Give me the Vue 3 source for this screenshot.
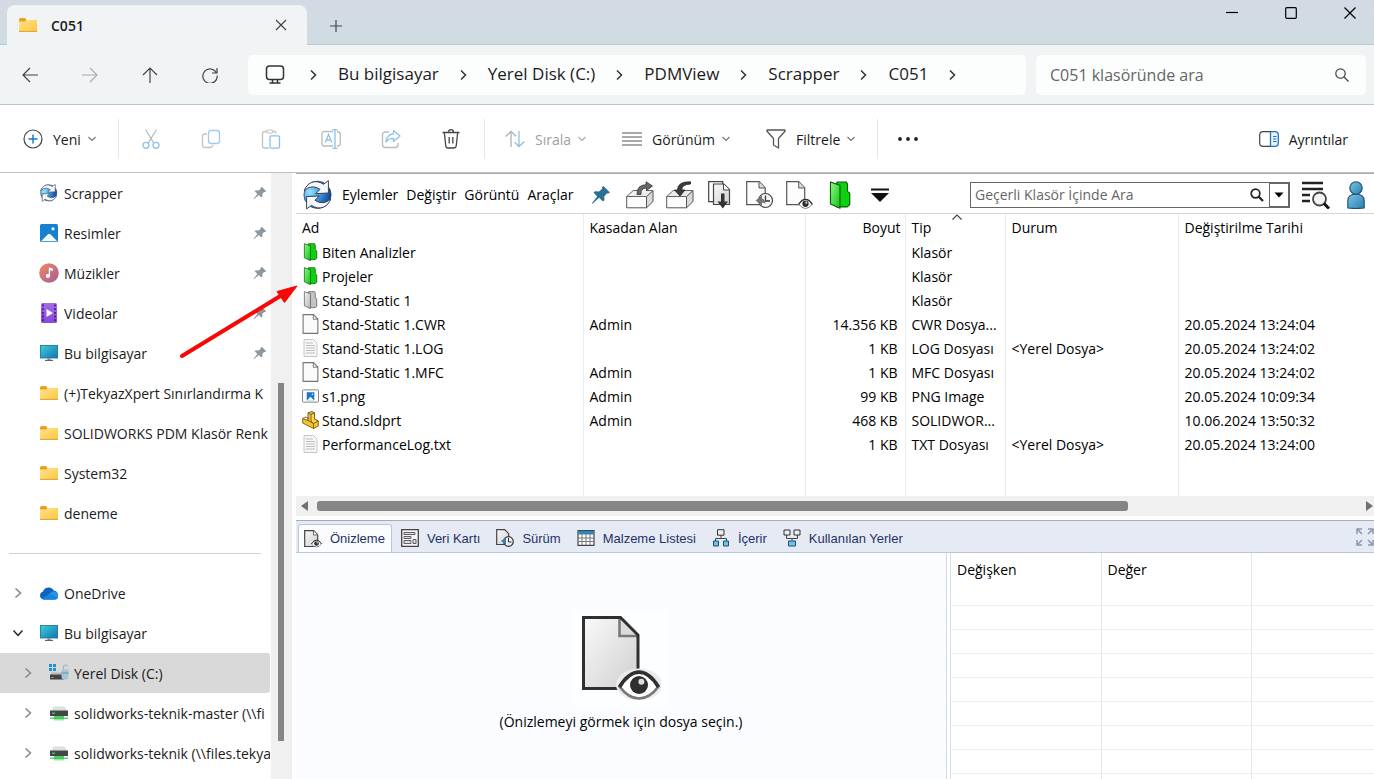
<script setup>
import { ref } from 'vue'

const folderQuery = ref('')
const vaultQuery = ref('')

const crumbs = ['Bu bilgisayar', 'Yerel Disk (C:)', 'PDMView', 'Scrapper', 'C051']

const fileActions = [
  { id: 'cut', label: 'Kes', off: true },
  { id: 'copy', label: 'Kopyala', off: true },
  { id: 'paste', label: 'Yapıştır', off: true },
  { id: 'rename', label: 'Yeniden adlandır', off: true },
  { id: 'share', label: 'Paylaş', off: true },
  { id: 'trash', label: 'Sil', off: false }
]

const viewActions = [
  { id: 'sort', label: 'Sırala', off: true },
  { id: 'lines', label: 'Görünüm', off: false },
  { id: 'funnel', label: 'Filtrele', off: false }
]

const quick = [
  { icon: 'vault', text: 'Scrapper', pinned: true },
  { icon: 'pictures', text: 'Resimler', pinned: true },
  { icon: 'music', text: 'Müzikler', pinned: true },
  { icon: 'videos', text: 'Videolar', pinned: true },
  { icon: 'pc', text: 'Bu bilgisayar', pinned: true },
  { icon: 'folder', text: '(+)TekyazXpert Sınırlandırma K' },
  { icon: 'folder', text: 'SOLIDWORKS PDM Klasör Renk' },
  { icon: 'folder', text: 'System32' },
  { icon: 'folder', text: 'deneme' }
]

const tree = [
  { icon: 'cloud', text: 'OneDrive' },
  { icon: 'pc', text: 'Bu bilgisayar', open: true },
  { icon: 'disk', text: 'Yerel Disk (C:)', child: true, active: true },
  { icon: 'netdrive', text: 'solidworks-teknik-master (\\\\fi', child: true },
  { icon: 'netdrive', text: 'solidworks-teknik (\\\\files.tekya', child: true }
]

const smallIcons = ['vault', 'pictures', 'pc', 'folder', 'netdrive']

const menus = ['Eylemler', 'Değiştir', 'Görüntü', 'Araçlar']

const vaultTools = [
  { id: 'checkout', label: 'Kasadan al' },
  { id: 'checkin', label: 'Kasaya koy' },
  { id: 'getlatest', label: 'Son sürümü al' },
  { id: 'getversion', label: 'Sürüm al' },
  { id: 'preview', label: 'Önizle' },
  { id: 'greenfolder', label: 'Klasör' },
  { id: 'more', label: 'Diğer' }
]

const files = [
  { icon: 'greenfolder', name: 'Biten Analizler', by: '', size: '', type: 'Klasör', state: '', date: '' },
  { icon: 'greenfolder', name: 'Projeler', by: '', size: '', type: 'Klasör', state: '', date: '' },
  { icon: 'greyfolder', name: 'Stand-Static 1', by: '', size: '', type: 'Klasör', state: '', date: '' },
  { icon: 'blank', name: 'Stand-Static 1.CWR', by: 'Admin', size: '14.356 KB', type: 'CWR Dosya...', state: '', date: '20.05.2024 13:24:04' },
  { icon: 'text', name: 'Stand-Static 1.LOG', by: '', size: '1 KB', type: 'LOG Dosyası', state: '<Yerel Dosya>', date: '20.05.2024 13:24:02' },
  { icon: 'blank', name: 'Stand-Static 1.MFC', by: 'Admin', size: '1 KB', type: 'MFC Dosyası', state: '', date: '20.05.2024 13:24:02' },
  { icon: 'image', name: 's1.png', by: 'Admin', size: '99 KB', type: 'PNG Image', state: '', date: '20.05.2024 10:09:34' },
  { icon: 'part', name: 'Stand.sldprt', by: 'Admin', size: '468 KB', type: 'SOLIDWOR...', state: '', date: '10.06.2024 13:50:32' },
  { icon: 'text', name: 'PerformanceLog.txt', by: '', size: '1 KB', type: 'TXT Dosyası', state: '<Yerel Dosya>', date: '20.05.2024 13:24:00' }
]

const tabs = [
  { id: 'tabpreview', text: 'Önizleme' },
  { id: 'tabcard', text: 'Veri Kartı' },
  { id: 'tabversion', text: 'Sürüm' },
  { id: 'tabbom', text: 'Malzeme Listesi' },
  { id: 'tabcontains', text: 'İçerir' },
  { id: 'tabwhere', text: 'Kullanılan Yerler' }
]
const activeTab = ref('tabpreview')
</script>

<template>
  <div class="window">
    <svg class="defs" aria-hidden="true">
      <defs>
        <linearGradient id="gFolder" x1="0" y1="0" x2="1" y2="1"><stop offset="0" stop-color="#ffe394" /><stop offset="1" stop-color="#fdc63c" /></linearGradient>
        <linearGradient id="gGreen" x1="0" y1="0" x2="1" y2="1"><stop offset="0" stop-color="#8dfa8d" /><stop offset="1" stop-color="#0bc50b" /></linearGradient>
        <linearGradient id="gGrey" x1="0" y1="0" x2="1" y2="1"><stop offset="0" stop-color="#f4f4f4" /><stop offset="1" stop-color="#b5b5b5" /></linearGradient>
        <linearGradient id="gPage" x1="0" y1="0" x2="1" y2="1"><stop offset="0" stop-color="#fafafa" /><stop offset="1" stop-color="#cfcfcf" /></linearGradient>
        <linearGradient id="gScreen" x1="0" y1="0" x2="1" y2="1"><stop offset="0" stop-color="#3fd0d8" /><stop offset="1" stop-color="#1173b4" /></linearGradient>
        <linearGradient id="gMusic" x1="0" y1="0" x2="1" y2="1"><stop offset="0" stop-color="#f08a5c" /><stop offset="1" stop-color="#a55c9c" /></linearGradient>
        <linearGradient id="gVideo" x1="0" y1="0" x2="0" y2="1"><stop offset="0" stop-color="#a56be8" /><stop offset="1" stop-color="#8748d6" /></linearGradient>
        <linearGradient id="gPerson" x1="0" y1="0" x2="1" y2="1"><stop offset="0" stop-color="#7cc4e8" /><stop offset="1" stop-color="#2a7fae" /></linearGradient>
        <radialGradient id="gBall" cx=".22" cy=".4" r=".8"><stop offset="0" stop-color="#9fe6ff" /><stop offset=".45" stop-color="#3f9be2" /><stop offset="1" stop-color="#123c94" /></radialGradient>
      </defs>

      <symbol id="folder" viewBox="0 0 18 16">
        <path d="M0 2.500Q0 1 1.500 1H6l1.500 2v3H0z" fill="#e9a21a" />
        <path d="M0 4.500h6L8 3h10v11.500H0z" fill="url(#gFolder)" />
        <path d="M0 14.400h18" stroke="#e0a030" stroke-width="1" />
      </symbol>
      <symbol id="vault" viewBox="0 0 30 30">
        <circle cx="14.500" cy="14.800" r="13.600" fill="url(#gBall)" stroke="#23406e" stroke-width=".8" />
        <g fill="#f6f8fb" stroke="#39424e" stroke-width="1" stroke-linejoin="round">
          <path d="M1.200 11C3.500 3 12-1.500 20.500 4.200L25.400.7V13L12.800 13.600l4.200-4.200C12 5.800 5.500 6 1.200 11z" />
          <path d="M27.800 18.600C25.500 26.600 17 31.100 8.500 25.400L3.600 28.900V16.600l12.600-.6-4.200 4.200C17 23.800 23.500 23.600 27.800 18.600z" />
        </g>
      </symbol>
      <symbol id="pictures" viewBox="0 0 18 18">
        <rect width="18" height="18" rx="1.500" fill="#1880d0" />
        <path d="M1 17.200L8 10.200q1.200-1 2.400 0l6.800 7z" fill="#f5fbff" />
        <circle cx="13" cy="4.800" r="1.600" fill="#fff" />
      </symbol>
      <symbol id="music" viewBox="0 0 20 20">
        <circle cx="10" cy="10" r="9.800" fill="url(#gMusic)" />
        <path d="M9.800 13V4.400l4 1v2.600l-2.800-.7v6z" fill="#fff" /><circle cx="8.900" cy="13" r="2.100" fill="#fff" />
      </symbol>
      <symbol id="videos" viewBox="0 0 16 20">
        <rect width="16" height="20" rx="1.500" fill="url(#gVideo)" />
        <path d="M2 1.500v17M14 1.500v17" stroke="#43207c" stroke-width="1.800" stroke-dasharray="1.800 1.900" />
        <path d="M5.500 6l6.500 4-6.500 4z" fill="#fff" />
      </symbol>
      <symbol id="pc" viewBox="0 0 18 16">
        <rect x=".4" y=".4" width="17.200" height="12.600" fill="url(#gScreen)" stroke="#1b6f98" stroke-width=".8" />
        <path d="M7.500 13h3v2h-3z" fill="#8a98a2" /><path d="M5 15.400h8" stroke="#5b6770" stroke-width="1.200" />
      </symbol>
      <symbol id="cloud" viewBox="0 0 20 14">
        <path d="M4.500 13.500a4 4 0 0 1-.6-7.800A6 6 0 0 1 14.800 4.600a4.600 4.600 0 0 1 1 8.900z" fill="#0b63bd" />
        <path d="M4 13.300L13 5.500a5 5 0 0 1 3 .2 4 4 0 0 1-.2 7.800H4.500z" fill="#2593e6" />
        <path d="M3 12.500l7.500-4.500 8.500 4q-1 1.500-3.200 1.500H4.500z" fill="#1b82dc" />
      </symbol>
      <symbol id="disk" viewBox="0 0 20 18">
        <path d="M0 0h3v3H0zM4 0h3v3H4zM0 4h3v3H0zM4 4h3v3H4z" fill="#1f8fd8" />
        <path d="M2 8.500h12v2H2z" fill="#b8b8b8" /><path d="M1 10.500h14v5H1z" fill="#414345" /><path d="M2.500 13.500h2" stroke="#4be070" stroke-width="1" />
        <path d="M14.500 5.500V3q0-2 2-2t2 1.500" fill="none" stroke="#9ab3c3" stroke-width="1.100" />
        <path d="M12.500 5.500h7v7q0 2.500-2 3h-3q-2-.5-2-3z" fill="#a8c3d4" /><path d="M12.500 9h7" stroke="#5f96b8" stroke-width="1" />
      </symbol>
      <symbol id="netdrive" viewBox="0 0 18 16">
        <path d="M3 2.500q0-1 1-1h10q1 0 1 1L17 6H1z" fill="#dedfe1" />
        <path d="M0 5.500h18v5.500H0z" fill="#434547" /><path d="M2 8.200h3" stroke="#44e06a" stroke-width="1.200" />
        <path d="M4 11h10v3H4z" fill="#4fcf5f" /><path d="M0 13.200h18" stroke="#45c258" stroke-width="1.200" /><path d="M4 14.800h10" stroke="#7be58a" stroke-width="1.200" />
      </symbol>
      <symbol id="pin" viewBox="0 0 20 20">
        <path d="M12.300 1l6.700 6.400-2 1.200-1.200-.2-2.600 3 .3 3.700-1.500 1.400-3.900-3.700L1.500 18.800l-.6-.6 5.300-6.700L2.500 7.600 4 6.200l4 .3L11.200 3.800 11 2.200z" />
      </symbol>
      <symbol id="greenfolder" viewBox="0 0 20 27">
        <path d="M7 1h9.200l1 2.200V10l2.200 1.800v11L17 25H7z" fill="#0cd20c" stroke="#0a5a0a" stroke-width="1.100" stroke-linejoin="round" />
        <path d="M.8 1L10 4.200v22L.8 22.200z" fill="url(#gGreen)" stroke="#0a5a0a" stroke-width="1.100" stroke-linejoin="round" />
      </symbol>
      <symbol id="greyfolder" viewBox="0 0 20 27">
        <path d="M7 1h9.200l1 2.200V10l2.200 1.800v11L17 25H7z" fill="#c3c3c3" stroke="#6c6c6c" stroke-width="1.300" stroke-linejoin="round" />
        <path d="M.8 1L10 4.200v22L.8 22.200z" fill="url(#gGrey)" stroke="#6c6c6c" stroke-width="1.300" stroke-linejoin="round" />
      </symbol>
      <symbol id="blank" viewBox="0 0 16 20">
        <path d="M.6.600h10.400l4.400 4.400v14.400H.6z" fill="#fafafa" stroke="#777" stroke-width="1.100" /><path d="M10.800.8v4.400h4.400" fill="none" stroke="#777" stroke-width="1" />
      </symbol>
      <symbol id="text" viewBox="0 0 16 20">
        <path d="M1.500 1.500h9.500l3.500 3.500v13.500h-13z" fill="#f7f7f7" stroke="#c8c8c8" stroke-width="1" />
        <path d="M3.500 5h7M3.500 7.500h9M3.500 10h9M3.500 12.500h9M3.500 15h9" stroke="#bdbdbd" stroke-width="1" />
      </symbol>
      <symbol id="image" viewBox="0 0 18 14">
        <rect x=".5" y=".5" width="17" height="13" rx="1" fill="#fdfdfd" stroke="#7c7c7c" />
        <rect x="5" y="3" width="8" height="8.500" fill="#1976c8" /><path d="M5.500 11.500L9 7.800l3.500 3.700z" fill="#fff" /><circle cx="11" cy="5.200" r=".8" fill="#fff" />
      </symbol>
      <symbol id="part" viewBox="0 0 17 18">
        <g stroke="#7b5a10" stroke-width=".9" stroke-linejoin="round">
          <path d="M.7 7.500L6 9.500V2l4-1.400L12.500 2v6l3.800 2v5L11.500 17.500 .7 12z" fill="#f4c430" />
          <path d="M6 2l3 1.400L12.500 2 10 .6z" fill="#ffe68c" />
          <path d="M9 3.400v6.600l2.500 2.500 4.800-2.500L12.500 8V2z" fill="#f9d552" />
          <path d="M.7 7.500L4 6l2 1v2.500l5.500 3v5" fill="none" />
        </g>
      </symbol>

      <symbol id="cut" viewBox="0 0 20 20">
        <path d="M4.500.5l8.300 13.600M15.500.5L7.200 14.100" fill="none" stroke="#b3b9bd" stroke-width="1.200" />
        <circle cx="5" cy="16.300" r="3" fill="none" stroke="#8cc0e8" stroke-width="1.300" /><circle cx="15" cy="16.300" r="3" fill="none" stroke="#8cc0e8" stroke-width="1.300" />
      </symbol>
      <symbol id="copy" viewBox="0 0 20 20">
        <path d="M6 5H3.500Q1.500 5 1.500 7v9q0 2.500 2.500 2.500h5q2.500 0 2.800-2.500" fill="none" stroke="#bfc3c6" stroke-width="1.300" />
        <rect x="7.500" y="1.500" width="11" height="13" rx="2.500" fill="none" stroke="#9ccbee" stroke-width="1.300" />
      </symbol>
      <symbol id="paste" viewBox="0 0 20 20">
        <path d="M6 2.500H3.500q-2 0-2 2v12.500q0 2 2 2H8M12 2.500h1q2 0 2 2" fill="none" stroke="#bfc3c6" stroke-width="1.300" />
        <rect x="5.500" y="1" width="6.500" height="3" rx="1.500" fill="none" stroke="#bfc3c6" stroke-width="1.200" />
        <rect x="9" y="6.800" width="9.500" height="12.400" rx="1.500" fill="none" stroke="#8cc0e8" stroke-width="1.300" />
      </symbol>
      <symbol id="rename" viewBox="0 0 20 20">
        <path d="M12 2.500H3.500q-2.500 0-2.500 2.500v9.500q0 2.500 2.500 2.500H12M16 2.500q3.300 0 3.300 2.500v9.500q0 2.500-3.300 2.500" fill="none" stroke="#b7bcc0" stroke-width="1.300" />
        <path d="M4.200 13.500L7.500 5.500l3.300 8M5.300 11h4.400M14 .7v18.600M11.500.7h5M11.500 19.300h5" fill="none" stroke="#8cc0e8" stroke-width="1.300" />
      </symbol>
      <symbol id="share" viewBox="0 0 20 20">
        <path d="M8 3H4.500Q1.500 3 1.500 6v9.500q0 3 3 3H14q3 0 3-3V14" fill="none" stroke="#b7bcc0" stroke-width="1.300" />
        <path d="M12.500 1.500L19 7l-6.500 5.500V9.300Q8 9 5 13q.5-7 7.500-8.300z" fill="none" stroke="#8cc0e8" stroke-width="1.300" stroke-linejoin="round" />
      </symbol>
      <symbol id="trash" viewBox="0 0 20 20">
        <path d="M1.500 3.500h17M3.300 3.500l1.500 13.500q.2 2 2.200 2h6q2 0 2.200-2l1.500-13.500M7.500 3.200q0-2.500 2.500-2.500t2.500 2.500M8.200 8v6.500M11.800 8v6.500" fill="none" stroke="#444" stroke-width="1.300" />
      </symbol>
      <symbol id="sort" viewBox="0 0 20 20">
        <path d="M6 18V2.500M.8 7.500L6 2.300l5 5" fill="none" stroke="#aab2b8" stroke-width="1.300" />
        <path d="M14 2v15.500M9.500 13l4.500 4.500 5.500-5" fill="none" stroke="#8cc0e8" stroke-width="1.300" />
      </symbol>
      <symbol id="lines" viewBox="0 0 20 20">
        <path d="M0 4h20M0 8h20M0 12h20M0 16h20" stroke="#555" stroke-width="1.200" />
      </symbol>
      <symbol id="funnel" viewBox="0 0 20 20">
        <path d="M1.500 1h17q1 0 .5 1.200L12.500 9.500v9.500l-5-3V9.500L1 2.200Q.5 1 1.500 1z" fill="none" stroke="#555" stroke-width="1.300" stroke-linejoin="round" />
      </symbol>

      <symbol id="checkout" viewBox="0 0 28 28">
        <path d="M.7 15.500h19.800v11.300H.7z" fill="#fdfdfd" stroke="#555" /><path d="M20.500 15.500l6.500-6v11l-6.500 6.300z" fill="#d9d9d9" stroke="#555" /><path d="M.7 15.500l6.500-6h5M20 9.500h7l-6.500 6H.7" fill="#eaeaea" stroke="#666" />
        <path d="M11 13.500Q10.500 4 20 3.700V.8L26.500 5 20.500 9.500V7Q14.500 7 15 13.500z" fill="#686868" stroke="#333" stroke-width=".8" />
      </symbol>
      <symbol id="checkin" viewBox="0 0 28 28">
        <path d="M.7 15.500h19.800v11.300H.7z" fill="#fdfdfd" stroke="#555" /><path d="M20.500 15.500l6.500-6v11l-6.500 6.300z" fill="#d9d9d9" stroke="#555" /><path d="M.7 15.500l6.500-6H27l-6.500 6z" fill="#eaeaea" stroke="#666" />
        <path d="M24.500.8Q11.500.5 11.600 9H8.500l5.500 6 5-6h-3.200Q15.500 3.500 24.500 3z" fill="#3c3c3c" stroke="#222" stroke-width=".8" />
      </symbol>
      <symbol id="getlatest" viewBox="0 0 24 28">
        <path d="M.7.700h14v20H.7z" fill="#fff" stroke="#444" stroke-width="1.200" /><path d="M5.500 3h10.500l5.500 5.500v15H5.500z" fill="url(#gPage)" stroke="#444" stroke-width="1.200" /><path d="M15.500 3v6h6" fill="#fff" stroke="#444" />
        <path d="M13 12.500h3.500v8h3.500l-5.200 7-5.300-7H13z" fill="#333" />
      </symbol>
      <symbol id="getversion" viewBox="0 0 28 28">
        <path d="M.7.700h12.500l6 6v17H.7z" fill="#fdfdfd" stroke="#555" stroke-width="1.200" /><path d="M13 .7v6.300h6" fill="#ddd" stroke="#555" />
        <circle cx="19.500" cy="19.500" r="7" fill="#fafafa" stroke="#444" stroke-width="1.200" /><path d="M19.500 14.500v5.500h4.500" fill="none" stroke="#333" stroke-width="1.300" /><path d="M9.500 19.500l6.500-5v3q3 .5 3.500 5.500-1.500-1.500-3.500-1.500v3z" fill="#777" />
      </symbol>
      <symbol id="eye" viewBox="0 0 28 20">
        <path d="M1 11Q7 1 14 1t13 10q-6 8-13 8T1 11z" fill="#fff" stroke="#777" stroke-width="1.800" />
        <path d="M1 11.300Q7 1.500 14 1.500t13 9.800" fill="none" stroke="#303030" stroke-width="2.400" />
        <circle cx="14" cy="10" r="6" fill="#2f2f2f" /><circle cx="15.600" cy="7.900" r="2" fill="#ddd" />
      </symbol>
      <symbol id="preview" viewBox="0 0 28 28">
        <path d="M.7.700h12l6 6v17H.7z" fill="#fdfdfd" stroke="#555" stroke-width="1.200" /><path d="M12.700.7v6.300h6" fill="#ddd" stroke="#555" />
        <use href="#eye" x="12" y="17.500" width="15" height="10.500" />
      </symbol>
      <symbol id="more" viewBox="0 0 20 20"><path d="M1 4.500h18" stroke="#111" stroke-width="2" /><path d="M1 8h18l-9 9z" fill="#111" /></symbol>
      <symbol id="bigpreview" viewBox="0 0 80 84">
        <path d="M2.500 1.500h37L57 19v53.500H2.500z" fill="url(#gPage)" /><path d="M38.500 2v18H57" fill="#dcdcdc" stroke="#777" stroke-width="2.500" />
        <path d="M2.500 1.500h37L57 19v53.500H2.500z" fill="none" stroke="#303030" stroke-width="3" />
        <ellipse cx="58" cy="68.500" rx="23" ry="16" fill="#e9ebed" /><use href="#eye" x="37" y="54" width="42" height="30" />
      </symbol>

      <symbol id="tabpreview" viewBox="0 0 18 18"><path d="M.7.700h9l4 4v11.800H.7z" fill="url(#gPage)" stroke="#444" stroke-width="1.200" /><path d="M9.500.7v4.300h4" fill="#fff" stroke="#666" /><use href="#eye" x="7" y="9" width="11" height="9" /></symbol>
      <symbol id="tabcard" viewBox="0 0 18 18"><path d="M.7.700h16.600v16.600H.7z" fill="#f5f5f5" stroke="#444" stroke-width="1.300" /><path d="M3 3.500h11v2H3zM3 7.500h7v2H3zM3 11.500h7v3H3zM12 10.500h3v4h-3z" fill="#ddd" stroke="#555" stroke-width=".9" /></symbol>
      <symbol id="tabversion" viewBox="0 0 18 18"><path d="M.7.700h8l4 4v10.800H.7z" fill="url(#gPage)" stroke="#444" stroke-width="1.200" /><circle cx="12.500" cy="12.500" r="4.800" fill="#eee" stroke="#333" stroke-width="1.200" /><path d="M12.500 9v4h3" fill="none" stroke="#333" /><path d="M5 12l5-3.500v7z" fill="#3a7fb0" /></symbol>
      <symbol id="tabbom" viewBox="0 0 18 18"><path d="M1 1.700h16v14.600H1z" fill="#fff" stroke="#444" stroke-width="1.200" /><path d="M1 2h16v3.500H1z" fill="#2f86b0" /><path d="M5 5v11M9 5v11M13 5v11M1 9h16M1 12.500h16" stroke="#777" /></symbol>
      <symbol id="tabcontains" viewBox="0 0 18 18"><path d="M9 6v4M3.500 12v-2.500h11V12" fill="none" stroke="#444" /><path d="M5.500.7h6.500v5.500H5.500z" fill="#eee" stroke="#333" /><path d="M1.500 12h5v5h-5zM11.500 12h5v5h-5z" fill="#6cc3e8" stroke="#1c4f70" /></symbol>
      <symbol id="tabwhere" viewBox="0 0 18 18"><path d="M3.500 6v3.500h11V6M9 9.500V12" fill="none" stroke="#444" /><path d="M1 1h6v5H1zM11 1h6v5h-6z" fill="#eee" stroke="#333" /><path d="M5.500 12h7v5h-7z" fill="#6cc3e8" stroke="#1c4f70" /></symbol>
    </svg>

    <header class="titlebar">
      <div class="tab">
        <svg class="i18"><use href="#folder" /></svg>
        <span class="tab-title">C051</span>
        <button class="icon-btn" aria-label="Sekmeyi kapat"><svg class="i12" viewBox="0 0 12 12"><path d="M1 1l10 10M11 1L1 11" class="ink" /></svg></button>
      </div>
      <button class="icon-btn new-tab" aria-label="Yeni sekme"><svg class="i12" viewBox="0 0 12 12"><path d="M6 0v12M0 6h12" class="ink" /></svg></button>
      <div class="win-buttons">
        <button class="icon-btn" aria-label="Simge durumuna küçült"><svg class="i12" viewBox="0 0 12 12"><path d="M0 5.500h12" class="ink black" /></svg></button>
        <button class="icon-btn" aria-label="Ekranı kapla"><svg class="i12" viewBox="0 0 12 12"><rect x=".7" y=".7" width="10.600" height="10.600" rx="1" class="ink black" /></svg></button>
        <button class="icon-btn" aria-label="Kapat"><svg class="i12" viewBox="0 0 12 12"><path d="M.5.5l11 11M11.500.5l-11 11" class="ink black" /></svg></button>
      </div>
    </header>

    <div class="navbar">
      <div class="nav-buttons">
        <button class="icon-btn" aria-label="Geri"><svg class="i16" viewBox="0 0 16 16"><path d="M16 8H1M8 1L1 8l7 7" class="ink" /></svg></button>
        <button class="icon-btn faded" aria-label="İleri" disabled><svg class="i16" viewBox="0 0 16 16"><path d="M0 8h15M8 1l7 7-7 7" class="ink" /></svg></button>
        <button class="icon-btn" aria-label="Yukarı"><svg class="i16" viewBox="0 0 16 16"><path d="M8 16V1M1 8l7-7 7 7" class="ink" /></svg></button>
        <button class="icon-btn" aria-label="Yenile"><svg class="i16" viewBox="0 0 16 16"><path d="M14.500 6A7.200 7.200 0 1 0 15.200 8.500M15 1v5h-5" class="ink" /></svg></button>
      </div>
      <nav class="address" aria-label="Adres">
        <svg class="i20" viewBox="0 0 20 20"><rect x="1.500" y="1" width="17" height="13.500" rx="3" class="ink mid" /><path d="M7.500 14.500v3M12.500 14.500v3M4.500 18h11" class="ink mid" /></svg>
        <svg class="chev first" viewBox="0 0 10 12"><path d="M3 1.500L7.500 6 3 10.500" class="ink mid" /></svg>
        <template v-for="c in crumbs" :key="c">
          <button class="crumb">{{ c }}</button>
          <svg class="chev" viewBox="0 0 10 12"><path d="M3 1.500L7.500 6 3 10.500" class="ink mid" /></svg>
        </template>
      </nav>
      <label class="search">
        <input v-model="folderQuery" type="text" placeholder="C051 klasöründe ara" aria-label="C051 klasöründe ara" />
        <svg class="i14" viewBox="0 0 14 14"><circle cx="5.500" cy="5.500" r="4.700" class="ink" /><path d="M9 9l4.500 4.500" class="ink" /></svg>
      </label>
    </div>

    <div class="commands">
      <button class="cmd new">
        <svg class="i20" viewBox="0 0 20 20"><circle cx="10" cy="10" r="9" class="ink" /><path d="M10 5.500v9M5.500 10h9" fill="none" stroke="#1a73c0" stroke-width="1.400" /></svg>
        <span>Yeni</span>
        <svg class="down" viewBox="0 0 8 8"><path d="M.5 2L4 5.500 7.500 2" class="ink" /></svg>
      </button>
      <div class="group icons">
        <button v-for="a in fileActions" :key="a.id" class="icon-btn" :aria-label="a.label" :disabled="a.off"><svg class="i20"><use :href="'#' + a.id" /></svg></button>
      </div>
      <div class="group views">
        <button v-for="a in viewActions" :key="a.id" class="cmd" :class="{ off: a.off }" :disabled="a.off">
          <svg class="i20"><use :href="'#' + a.id" /></svg>
          <span>{{ a.label }}</span>
          <svg class="down" viewBox="0 0 8 8"><path d="M.5 2L4 5.500 7.500 2" class="ink" /></svg>
        </button>
      </div>
      <div class="group last">
        <button class="icon-btn" aria-label="Diğer seçenekler"><svg class="i20" viewBox="0 0 20 20"><g fill="#222"><circle cx="2" cy="10" r="1.900" /><circle cx="10" cy="10" r="1.900" /><circle cx="18" cy="10" r="1.900" /></g></svg></button>
      </div>
      <button class="cmd details">
        <svg class="i20" viewBox="0 0 20 20"><path d="M12 2.700H4Q.7 2.700.7 6v8Q.7 17.300 4 17.300h8" class="ink" /><path d="M11.500 2.700H16q3.300 0 3.300 3.300v8q0 3.300-3.300 3.300h-4.500z" fill="#eaf4fc" stroke="#1a73c0" stroke-width="1.300" /><path d="M14 7.500h3.500M14 10h3.500M14 12.500h3.500" stroke="#1a73c0" /></svg>
        <span>Ayrıntılar</span>
      </button>
    </div>

    <div class="body">
      <aside class="sidebar">
        <nav class="tree" aria-label="Gezinti">
          <a v-for="q in quick" :key="q.text" class="node" href="#">
            <svg class="i20" :class="{ small: smallIcons.includes(q.icon) }"><use :href="'#' + q.icon" /></svg>
            <span class="label">{{ q.text }}</span>
            <svg v-if="q.pinned" class="pin"><use href="#pin" /></svg>
          </a>
          <hr />
          <a v-for="n in tree" :key="n.text" class="node branch" :class="{ child: n.child, active: n.active }" href="#">
            <svg class="twist" :class="{ open: n.open }" viewBox="0 0 10 10"><path d="M2.500.5L7.500 5l-5 4.500" class="ink mid" /></svg>
            <svg class="i20" :class="{ small: smallIcons.includes(n.icon) }"><use :href="'#' + n.icon" /></svg>
            <span class="label">{{ n.text }}</span>
          </a>
        </nav>
        <div class="vscroll"><div class="vthumb"></div></div>
      </aside>

      <main class="vault">
        <div class="vault-bar">
          <svg class="i30"><use href="#vault" /></svg>
          <div class="menus"><button v-for="m in menus" :key="m" class="menu">{{ m }}</button></div>
          <button class="icon-btn bluepin" aria-label="Sabitle"><svg class="i20"><use href="#pin" /></svg></button>
          <div class="tools">
            <button v-for="t in vaultTools" :key="t.id" class="icon-btn" :aria-label="t.label"><svg class="i28" :class="{ i20: t.id === 'more' }"><use :href="'#' + t.id" /></svg></button>
          </div>
          <div class="vault-search">
            <input v-model="vaultQuery" type="text" placeholder="Geçerli Klasör İçinde Ara" aria-label="Geçerli Klasör İçinde Ara" />
            <button class="icon-btn" aria-label="Ara"><svg class="i14" viewBox="0 0 14 14"><circle cx="5.500" cy="5.500" r="4.300" fill="none" stroke="#222" stroke-width="1.700" /><path d="M8.500 8.500l4.500 4.500" stroke="#222" stroke-width="2.200" /></svg></button>
            <button class="drop" aria-label="Arama seçenekleri"><svg class="i10" viewBox="0 0 10 10"><path d="M.5 2.500h9L5 7.500z" /></svg></button>
          </div>
          <button class="icon-btn" aria-label="Gelişmiş arama"><svg class="i28" viewBox="0 0 28 28"><path d="M0 2h21M0 8h21M0 14h8M0 20h8" stroke="#222" stroke-width="2.600" /><circle cx="17.500" cy="18" r="6.500" fill="#f4f4f4" stroke="#444" stroke-width="1.800" /><path d="M22 22.500l5 5" stroke="#111" stroke-width="3" /></svg></button>
          <button class="icon-btn person" aria-label="Kullanıcı"><svg class="i28" viewBox="0 0 18 28"><path d="M.8 27V20q0-7 8.200-7t8.200 7v7q-8.200 1-16.400 0z" fill="url(#gPerson)" stroke="#1d4e6c" stroke-width="1.100" /><circle cx="9" cy="7" r="6.200" fill="url(#gPerson)" stroke="#1d4e6c" stroke-width="1.100" /></svg></button>
        </div>

        <table class="files">
          <colgroup><col class="c-name" /><col class="c-by" /><col class="c-size" /><col class="c-type" /><col class="c-state" /><col /></colgroup>
          <thead>
            <tr>
              <th>Ad</th><th>Kasadan Alan</th><th class="num">Boyut</th>
              <th class="sorted">Tip<svg class="sortmark" viewBox="0 0 10 6"><path d="M.5 5.500L5 1l4.500 4.500" class="ink" /></svg></th>
              <th>Durum</th><th>Değiştirilme Tarihi</th>
            </tr>
          </thead>
          <tbody>
            <tr v-for="f in files" :key="f.name">
              <td><div class="fname"><svg class="ficon" :class="{ dir: f.type === 'Klasör' }"><use :href="'#' + f.icon" /></svg>{{ f.name }}</div></td>
              <td>{{ f.by }}</td><td class="num">{{ f.size }}</td><td>{{ f.type }}</td><td>{{ f.state }}</td><td>{{ f.date }}</td>
            </tr>
            <tr class="filler"><td></td><td></td><td></td><td></td><td></td><td></td></tr>
          </tbody>
        </table>

        <div class="hscroll">
          <svg class="i10" viewBox="0 0 10 10"><path d="M8 0v10L1 5z" fill="#707070" /></svg>
          <div class="htrack"><div class="hthumb"></div></div>
          <svg class="i10" viewBox="0 0 10 10"><path d="M2 0v10l7-5z" fill="#707070" /></svg>
        </div>

        <div class="tabs" role="tablist">
          <button v-for="t in tabs" :key="t.id" class="ptab" :class="{ on: activeTab === t.id }" role="tab" :aria-selected="activeTab === t.id" @click="activeTab = t.id">
            <svg class="i18"><use :href="'#' + t.id" /></svg>{{ t.text }}
          </button>
          <button class="icon-btn expand" aria-label="Genişlet"><svg class="i18" viewBox="0 0 18 18"><path d="M1 6V1h5M1 1l5 5M12 1h5v5M17 1l-5 5M1 12v5h5M1 17l5-5M17 12v5h-5M17 17l-5-5" fill="none" stroke="#8b98ad" stroke-width="1.500" /></svg></button>
        </div>

        <div class="panel">
          <section class="preview">
            <div class="thumb"><svg><use href="#bigpreview" /></svg></div>
            <p>(Önizlemeyi görmek için dosya seçin.)</p>
          </section>
          <section class="vars">
            <table>
              <colgroup><col class="c-var" /><col class="c-var" /><col /></colgroup>
              <thead><tr><th>Değişken</th><th>Değer</th><th></th></tr></thead>
              <tbody><tr v-for="n in 9" :key="n"><td></td><td></td><td></td></tr></tbody>
            </table>
          </section>
        </div>
      </main>

      <svg class="pointer" viewBox="0 0 120 74" aria-hidden="true"><path d="M4 71L104 10" stroke="#fb0607" stroke-width="4" stroke-linecap="round" /><path d="M119 1L99 6.500l7.500 11z" fill="#fb0607" stroke="#fb0607" /></svg>
    </div>
  </div>
</template>

<style>
html,
body {
  margin: 0;
  background: #fff;
}
</style>

<style scoped>
.window {
  display: flex;
  flex-direction: column;
  height: 100vh;
  overflow: hidden;
  background: #fff;
  color: #1b1b1b;
  font-family: "Open Sans", "Noto Sans", "Liberation Sans", sans-serif;
  font-size: 14px;
}
.window * { box-sizing: border-box; }
.defs { position: absolute; width: 0; height: 0; }
button { padding: 0; border: 0; background: none; color: inherit; font: inherit; white-space: nowrap; }
svg { display: block; flex: none; }
.icon-btn { display: flex; align-items: center; justify-content: center; flex: none; }
.ink { fill: none; stroke: #444; stroke-width: 1.2; }
.mid { stroke-width: 1.5; }
.black { stroke: #000; }
.i10 { width: 10px; height: 10px; }
.i12 { width: 12px; height: 12px; }
.i14 { width: 14px; height: 14px; }
.i16 { width: 16px; height: 16px; }
.i18 { width: 18px; height: 18px; }
.i28 { width: 28px; height: 28px; }
.i20 { width: 20px; height: 20px; }
.i30 { width: 30px; height: 30px; }

.titlebar {
  display: flex;
  flex: none;
  height: 45px;
  padding-left: 7px;
  border-bottom: 1px solid #bccad0;
  background: linear-gradient(#d4dae3, #d0dbe2);
}
.tab {
  display: flex;
  align-items: center;
  width: 300px;
  height: 40px;
  margin-top: 5px;
  padding: 0 20px 0 12px;
  border-radius: 8px 8px 0 0;
  background: #f0f4f5;
}
.tab-title { flex: 1; margin-left: 14px; font-weight: 600; }
.new-tab { width: 58px; padding-top: 8px; }
.win-buttons { display: flex; gap: 47px; height: 26px; margin-left: auto; padding-right: 18px; }

.navbar {
  display: flex;
  align-items: center;
  flex: none;
  height: 60px;
  padding-right: 8px;
  border-bottom: 1px solid #b9c5cb;
  background: #f0f4f5;
}
.nav-buttons { display: flex; width: 248px; }
.nav-buttons .icon-btn { width: 60px; height: 40px; }
.faded { opacity: 0.4; }
.address {
  display: flex;
  align-items: center;
  flex: 1;
  height: 40px;
  padding-left: 17px;
  border-radius: 5px;
  background: #fcfdfd;
  font-size: 17px;
}
.address .mid { stroke: #333; }
.crumb { line-height: 24px; padding-bottom: 2px; }
.chev { width: 10px; height: 12px; margin: 0 20px 0 19px; }
.chev.first { margin-left: 23px; }
.search {
  display: flex;
  align-items: center;
  width: 330px;
  height: 40px;
  margin-left: 10px;
  padding: 0 17px 0 14px;
  border-radius: 5px;
  background: #fcfdfd;
}
input { flex: 1; min-width: 0; padding: 0; border: 0; outline: 0; background: none; color: inherit; font: inherit; }
.search input { font-size: 16px; }
input::placeholder { color: #666; opacity: 1; }

.commands {
  display: flex;
  align-items: center;
  flex: none;
  height: 68px;
  border-bottom: 1px solid #b9c5c8;
}
.cmd { display: flex; align-items: center; gap: 10px; }
.cmd span { padding-top: 1px; }
.down { width: 8px; height: 8px; margin-left: -3px; }
.down .ink { stroke: #777; }
.cmd.new { width: 118px; padding-left: 23px; }
.group { display: flex; align-items: center; height: 40px; border-left: 1px solid #e6e6e6; }
.icons { width: 366px; padding-left: 2px; }
.icons .icon-btn { width: 60px; }
.views { gap: 36px; width: 393px; padding-left: 20px; }
.last { padding-left: 20px; }
.off { color: #a0a0a0; }
.off .ink { stroke: #aaa; }
.details { margin-left: auto; padding-right: 26px; }

.body { position: relative; display: flex; flex: 1; min-height: 0; }
.sidebar { display: flex; flex: none; width: 292px; border-right: 1px solid #ececec; }
.tree { flex: 1; min-width: 0; overflow: hidden; }
.node {
  display: flex;
  align-items: center;
  height: 40px;
  margin-right: 1px;
  padding-left: 39px;
  color: #1b1b1b;
  text-decoration: none;
}
.node .small { width: 18px; height: 18px; margin: 0 1px; }
.label { flex: 1; min-width: 0; margin-left: 5px; overflow: hidden; white-space: nowrap; }
.pin { width: 14px; height: 14px; margin-right: 3px; fill: #8d979f; }
.branch { padding-left: 13px; }
.child { padding-left: 23px; }
.active { border-radius: 0 3px 3px 0; background: #d9d9d9; }
.twist { width: 10px; height: 10px; margin-right: 16px; }
.twist .ink { stroke: #888; }
.twist.open { transform: rotate(90deg); }
.twist.open .ink { stroke: #222; }
hr { height: 1px; margin: 20px 10px 19px 9px; border: 0; background: #cfd3d3; }
.vscroll { display: flex; flex-direction: column; width: 20px; background: #f0f0f0; }
.vthumb { width: 6px; height: 59%; margin: auto 7px 38px; background: #858585; }

.vault { display: flex; flex-direction: column; flex: 1; min-width: 0; margin-left: 4px; border-top: 1px solid #a8a8a8; color: #000; }
.vault-bar { display: flex; align-items: center; flex: none; height: 40px; padding: 2px 4px 0 7px; border-bottom: 1px solid #d5d5d5; }
.menus { display: flex; gap: 8px; margin-left: 9px; }
.bluepin { margin-left: 17px; fill: #2b6f97; }
.tools { display: flex; margin-left: 9px; }
.tools .icon-btn { width: 40px; }
.vault-search { display: flex; align-items: center; width: 320px; height: 26px; margin: 0 12px 0 auto; padding-left: 4px; border: 1px solid #666; }
.drop { display: flex; align-items: center; justify-content: center; width: 20px; height: 24px; margin-left: 5px; border: 1px solid #666; }
.person { width: 28px; margin-left: 12px; }

table { border-collapse: collapse; table-layout: fixed; width: 100%; }
th, td { padding: 0 0 0 6px; overflow: hidden; font-weight: 400; text-align: left; white-space: nowrap; }
.files { flex: none; }
.files th { height: 26px; }
.files td { height: 24px; }
.files th:not(:last-child), .files td:not(:last-child) { border-right: 1px solid #e6edf1; }
.files .filler td { height: 40px; }
.files .num { padding-right: 7px; text-align: right; }
.files th.num { padding-right: 4px; }
.c-name { width: 287px; }
.c-by { width: 222px; }
.c-size { width: 100px; }
.c-type { width: 100px; }
.c-state { width: 173px; }
.sorted { position: relative; }
.sortmark { position: absolute; top: 0; left: 46px; width: 10px; height: 6px; }
.fname { display: flex; align-items: center; gap: 3px; }
.ficon { width: 17px; height: 20px; }
.ficon.dir { height: 18px; }

.hscroll { display: flex; align-items: center; flex: none; gap: 7px; height: 20px; margin-bottom: 4px; padding: 0 0 0 4px; background: #f0f0f0; }
.htrack { flex: 1; }
.hthumb { width: 78%; height: 10px; border-radius: 3px; background: #858585; }

.tabs {
  display: flex;
  align-items: flex-end;
  flex: none;
  height: 33px;
  padding-left: 2px;
  border-top: 1px solid #9fadbf;
  border-bottom: 1px solid #b9c6d6;
  background: #e6eaf5;
  color: #1f3364;
  font-family: "Liberation Sans", Arial, sans-serif;
  font-size: 13px;
}
.ptab { display: flex; align-items: center; gap: 8px; height: 28px; padding: 0 0 0 16px; }
.ptab.on { padding: 0 6px 0 5px; margin-right: -7px; border: 1px solid #b9c6d6; border-bottom: 0; border-radius: 3px 3px 0 0; background: #fafcff; }
.expand { height: 31px; margin-left: auto; }

.panel { display: flex; flex: 1; min-height: 0; }
.preview { display: flex; flex-direction: column; align-items: center; flex: 1; border-right: 1px solid #cfdbe6; background: #fafcff; }
.thumb { display: flex; align-items: center; justify-content: center; width: 96px; height: 96px; margin-top: 57px; background: #fdfeff; }
.thumb svg { width: 80px; height: 84px; }
.preview p { margin: 6px 0 0; line-height: 20px; }
.vars { width: 424px; margin-left: 3px; border-left: 1px solid #d5dfe8; overflow: hidden; }
.vars th { height: 52px; padding-bottom: 19px; }
.vars td { height: 24px; }
.vars th, .vars td { border-bottom: 1px solid #e9eef2; }
.vars th:not(:last-child), .vars td:not(:last-child) { border-right: 1px solid #e3e8ec; }
.c-var { width: 150px; }

.pointer { position: absolute; top: 112px; left: 178px; width: 120px; height: 74px; }
</style>
